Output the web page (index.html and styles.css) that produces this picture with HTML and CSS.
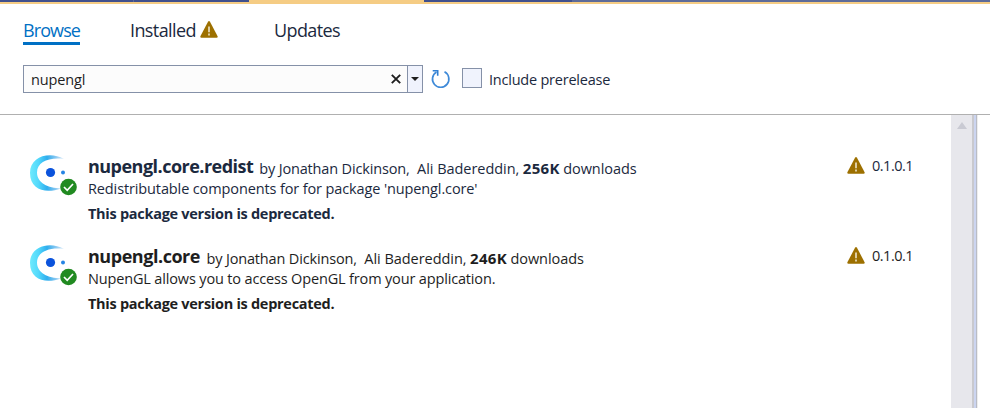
FILE: index.html
```
<!DOCTYPE html>
<html lang="en">
<head>
<meta charset="utf-8">
<title>NuGet Package Manager</title>
<link rel="stylesheet" href="styles.css">
</head>
<body>
<svg class="defs" width="0" height="0">
  <symbol id="warn" viewBox="0 0 18 17"><path d="M8 .8Q9 -.6 10 .8L17.6 15.2Q18 16.7 16.6 16.7H1.4Q0 16.7.4 15.2Z" fill="#9d7000"/><path d="M9 5.6v5.6M9 12.4v2" stroke="#f4ecd8" stroke-width="1.5"/></symbol>
  <symbol id="pkg" viewBox="0 0 50 42">
    <defs><linearGradient id="cres" x1="0" y1="0" x2="1" y2="0"><stop offset="0" stop-color="#6eeafd"/><stop offset=".25" stop-color="#52d8fb"/><stop offset=".5" stop-color="#30aeee"/><stop offset="1" stop-color="#2a90e0" stop-opacity=".15"/></linearGradient></defs>
    <path d="M35 4C21-4 1 1 1 18s16 21 31 15.500C19 33 8 28 8 17.500S20 2 35 4Z" fill="url(#cres)"/>
    <circle cx="21.500" cy="17.500" r="4.600" fill="#0b53dc"/><circle cx="34" cy="17.500" r="2" fill="#2584e4"/>
    <circle cx="39.500" cy="32" r="8.300" fill="#218a21"/><path d="M35 32l3.200 3.300 5.800-6.300" fill="none" stroke="#fff" stroke-width="1.700"/>
  </symbol>
</svg>
<div class="strip"><i class="tab-a"></i><i class="tab-b"></i><i class="tab-on"></i><i class="tab-c"></i></div>
<header class="top">
  <nav class="tabs">
    <a class="tab browse active">Browse</a>
    <a class="tab installed">Installed<svg class="warn"><use href="#warn"/></svg></a>
    <a class="tab updates">Updates</a>
  </nav>
  <div class="search-row">
    <div class="search"><span class="query">nupengl</span>
      <svg class="clear" viewBox="0 0 10 10"><path d="M.8.8l8.400 8.400M9.200.8L.8 9.200" stroke="#1e1e1e" stroke-width="1.900"/></svg>
      <span class="drop"><svg viewBox="0 0 8 4"><path d="M0 0h8L4 4Z" fill="#1e1e1e"/></svg></span></div>
    <svg class="refresh" viewBox="0 0 20 20"><path d="M13.500 2.800A8.200 8.200 0 1 1 5.500 3" fill="none" stroke="#3f8ad8" stroke-width="1.700"/><path d="M1.700 1.800H6.700V6.800" fill="none" stroke="#2f7fd3" stroke-width="1.600"/></svg>
    <span class="check"></span><span class="check-label">Include prerelease</span>
  </div>
</header>
<main class="body">
  <section class="list">
    <article class="item navy">
      <svg class="icon"><use href="#pkg"/></svg>
      <div class="info">
        <div class="line head"><b class="name">nupengl.core.redist</b><span class="by">by Jonathan Dickinson,</span><span class="ali">Ali Badereddin,</span><b class="cnt">256K</b><span class="dl">downloads</span></div>
        <div class="desc">Redistributable components for for package 'nupengl.core'</div>
        <div class="dep"><b>This package version is deprecated.</b></div>
      </div>
      <div class="ver"><svg class="warn"><use href="#warn"/></svg><span class="num">0.1.0.1</span></div>
    </article>
    <article class="item">
      <svg class="icon"><use href="#pkg"/></svg>
      <div class="info">
        <div class="line head"><b class="name">nupengl.core</b><span class="by">by Jonathan Dickinson,</span><span class="ali">Ali Badereddin,</span><b class="cnt">246K</b><span class="dl">downloads</span></div>
        <div class="desc">NupenGL allows you to access OpenGL from your application.</div>
        <div class="dep"><b>This package version is deprecated.</b></div>
      </div>
      <div class="ver"><svg class="warn"><use href="#warn"/></svg><span class="num">0.1.0.1</span></div>
    </article>
  </section>
  <div class="scroll"><svg viewBox="0 0 10 7"><path d="M0 7L5 0l5 7Z" fill="#c9cad3"/></svg></div>
  <div class="edge"></div>
</main>
</body>
</html>
```

FILE: styles.css
```
* { box-sizing: border-box; }
body { margin: 0; height: 408px; overflow: hidden; background: #fff; color: #1e1e1e; font: 14.5px/20px "Open Sans", "Noto Sans", sans-serif; display: flex; flex-direction: column; }
svg { display: block; flex: none; }
.defs { position: absolute; }
.strip { height: 4px; flex: none; display: flex; background: #5d6b99; border-bottom: 2px solid #f5cc84; }
.strip i { height: 2px; background: #40508d; }
.tab-a { width: 133px; }
.tab-b { width: 115px; margin-left: 1px; }
.strip .tab-on { width: 175px; background: #f5cc84; }
.tab-c { width: 148px; }
.top { height: 111px; flex: none; border-bottom: 1px solid #b0b0b0; padding: 13px 23px 0; color: #1b293e; }
.tabs { display: flex; height: 28px; font-size: 18px; line-height: 27px; letter-spacing: -.6px; }
.tab { display: flex; height: 28px; white-space: nowrap; }
.active { color: #0070c4; border-bottom: 3px solid #0070c4; }
.browse { width: 57px; margin-right: 50px; letter-spacing: -.9px; }
.installed { width: 144px; }
.installed .warn { margin: 4px 0 0 4px; }
.warn { width: 18px; height: 17px; }
.search-row { display: flex; align-items: center; height: 28px; margin-top: 20px; white-space: nowrap; }
.search { width: 400px; height: 28px; border: 1px solid #8591a8; background: #fcfcfc; display: flex; align-items: center; color: #1e1e1e; }
.query { margin-left: 7px; padding-top: 2px; letter-spacing: -.15px; }
.clear { width: 10px; height: 10px; margin-left: auto; }
.drop { width: 15px; height: 26px; margin-left: 6px; border-left: 1px solid #8591a8; background: #f0f3fd; display: flex; align-items: center; justify-content: center; }
.drop svg { width: 8px; height: 4px; }
.refresh { width: 20px; height: 20px; margin: -1px 11px 0 8px; }
.check { width: 20px; height: 20px; border: 1px solid #8591a8; background: #f0f3fd; margin: -2px 7px 0 0; }
.check-label { padding-top: 2px; letter-spacing: -.22px; }
.body { flex: 1; display: flex; }
.list { width: 951px; padding-top: 38px; }
.item { display: flex; height: 90px; padding-left: 29px; white-space: nowrap; }
.navy { color: #1b293e; }
.icon { width: 50px; height: 42px; margin: 2px 9px 0 0; }
.info { width: 759px; }
.line { display: flex; }
.head { height: 26px; line-height: 32px; }
.name { font-size: 18px; line-height: 27px; letter-spacing: -.52px; margin-right: 6px; }
.item:not(.navy) .name { letter-spacing: -.46px; margin-right: 6.5px; }
.by { letter-spacing: -.16px; margin-right: 7.5px; }
.ali { letter-spacing: -.04px; margin-right: 3.5px; }
.cnt { font-size: 15px; line-height: 31px; letter-spacing: .3px; margin-right: 3.5px; }
.dl { letter-spacing: -.05px; }
.desc { height: 20px; letter-spacing: -.12px; }
.item:not(.navy) .desc { letter-spacing: -.155px; }
.dep { height: 20px; margin-top: 5px; letter-spacing: -.28px; }
.ver { display: flex; gap: 7px; padding-top: 4px; }
.num { line-height: 18px; letter-spacing: -.5px; }
.scroll { width: 21px; background: #e7e7ec; padding: 7px 0 0 6px; }
.scroll svg { width: 10px; height: 7px; }
.edge { width: 5px; border: solid #c9c9ce; border-width: 0 1px 0 2px; border-right-color: #b9bcc6; background: #ccd5f0; box-shadow: 1px 0 #eee; }
```
